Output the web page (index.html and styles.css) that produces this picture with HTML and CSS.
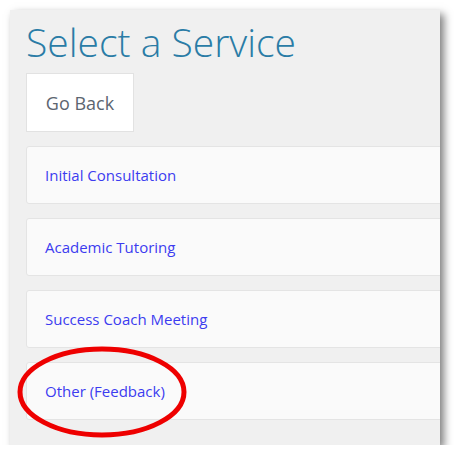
FILE: index.html
```html
<!DOCTYPE html>
<html>
<head>
    <title>Select a Service</title>
    <meta charset="UTF-8">
    <meta name="viewport" content="width=device-width, initial-scale=1.0">
<link rel="stylesheet" href="styles.css">
</head>
<body>

<div class="panel">
    <h1 class="panel-title">Select a Service</h1>

    <button class="btn">Go Back</button>

    <div class="services">
        <a class="service" href="#">Initial Consultation</a>
        <a class="service" href="#">Academic Tutoring</a>
        <a class="service" href="#">Success Coach Meeting</a>
        <a class="service" href="#">Other (Feedback)</a>
    </div>

    <!-- highlight -->
    <svg class="mark" width="172" height="94" viewBox="0 0 172 94">
        <ellipse cx="86" cy="47" rx="82" ry="43" fill="none" stroke="#ee0000" stroke-width="5"/>
    </svg>
</div>

</body>
</html>
```

FILE: styles.css
```css
/* page */
    body{
        padding:0;
        margin:0;
        background-color:#ffffff;
        font:normal 15px "Open Sans", sans-serif;
    }
    .panel{
        position:relative;
        overflow:hidden;
        width:430px;
        height:435px;
        margin:10px 0 0 10px;
        padding:0 0 0 16px;
        box-sizing:border-box;
        background-color:#f0f0f0;
        box-shadow:4px 4px 8px rgba(0,0,0,.5);
    }
    .panel-title{
        margin:0;
        padding-top:10px;
        font-size:39px;
        font-weight:300;
        line-height:44px;
        color:#2a7ca6;
    }
/* button */
    .btn{
        display:block;
        width:108px;
        height:59px;
        margin-top:9px;
        padding:0;
        background-color:#ffffff;
        border:1px solid #e2e2e2;
        font:normal 18px "Open Sans", sans-serif;
        color:#5c6570;
    }
/* services */
    .services{
        display:flex;
        flex-direction:column;
        gap:14px;
        margin-top:14px;
    }
    .service{
        display:flex;
        align-items:center;
        width:450px;
        height:58px;
        padding-left:18px;
        box-sizing:border-box;
        background-color:#fafafa;
        border:1px solid #e4e4e4;
        border-radius:3px;
        color:#3c3cf0;
        text-decoration:none;
    }
/* highlight */
    .mark{
        position:absolute;
        left:6px;
        top:335px;
    }
```
